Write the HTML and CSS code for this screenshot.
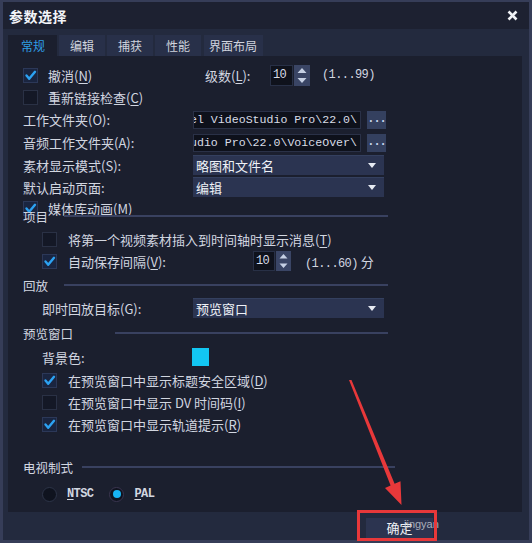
FILE: index.html
```html
<!DOCTYPE html>
<html lang="zh">
<head>
<meta charset="utf-8">
<title>参数选择</title>
<link rel="stylesheet" href="styles.css">
</head>
<body>
<div class="dialog">
  <div class="titlebar">
    <span class="title">参数选择</span>
    <svg class="close" width="11" height="11" viewBox="0 0 11 11"><path d="M1.5 1.5 L9.5 9.5 M9.5 1.5 L1.5 9.5"/></svg>
  </div>
  <div class="tabs">
    <div class="tab active">常规</div>
    <div class="tab">编辑</div>
    <div class="tab">捕获</div>
    <div class="tab">性能</div>
    <div class="tab last">界面布局</div>
  </div>
  <div class="panel">
    <div class="row r1">
      <span class="cb on"><svg viewBox="0 0 13 13"><path d="M2.5 6.5 L5.2 9.8 L11 2.8"/></svg></span>
      <span class="lbl w157">撤消(<u>N</u>)</span>
      <span class="lbl w65">级数(<u>L</u>):</span>
      <span class="spin"><span class="spin-val">10</span><span class="spin-btn"><svg viewBox="0 0 16 21"><path d="M8 3 L12.5 8 L3.5 8 Z M3.5 13 L12.5 13 L8 18 Z"/></svg></span></span>
      <span class="mono range">(1...99)</span>
    </div>
    <div class="row r2">
      <span class="cb"></span>
      <span class="lbl">重新链接检查(<u>C</u>)</span>
    </div>
    <div class="row r3">
      <span class="lbl w170">工作文件夹(O):</span>
      <span class="path"><span class="path-t">el VideoStudio Pro\22.0\</span></span>
      <span class="dots">...</span>
    </div>
    <div class="row r3">
      <span class="lbl w170">音频工作文件夹(A):</span>
      <span class="path"><span class="path-t">udio Pro\22.0\VoiceOver\</span></span>
      <span class="dots">...</span>
    </div>
    <div class="row">
      <span class="lbl w170">素材显示模式(S):</span>
      <span class="select">略图和文件名<svg viewBox="0 0 8 5"><path d="M0 0 L8 0 L4 5 Z"/></svg></span>
    </div>
    <div class="row">
      <span class="lbl w170">默认启动页面:</span>
      <span class="select">编辑<svg viewBox="0 0 8 5"><path d="M0 0 L8 0 L4 5 Z"/></svg></span>
    </div>
    <div class="row r7">
      <span class="cb on"><svg viewBox="0 0 13 13"><path d="M2.5 6.5 L5.2 9.8 L11 2.8"/></svg></span>
      <span class="lbl">媒体库动画(<u>M</u>)</span>
    </div>
    <div class="grp g-proj"><span>项目</span></div>
    <div class="row ind mt2">
      <span class="cb"></span>
      <span class="lbl">将第一个视频素材插入到时间轴时显示消息(<u>T</u>)</span>
    </div>
    <div class="row ind">
      <span class="cb on"><svg viewBox="0 0 13 13"><path d="M2.5 6.5 L5.2 9.8 L11 2.8"/></svg></span>
      <span class="lbl w185">自动保存间隔(<u>V</u>):</span>
      <span class="spin small"><span class="spin-val">10</span><span class="spin-btn"><svg viewBox="0 0 15 20"><path d="M7.5 3 L11.5 7.5 L3.5 7.5 Z M3.5 12.5 L11.5 12.5 L7.5 17 Z"/></svg></span></span>
      <span class="range2"><span class="mono">(1...60)</span> 分</span>
    </div>
    <div class="grp mt3"><span>回放</span></div>
    <div class="row ind2 mt2">
      <span class="lbl w151">即时回放目标(G):</span>
      <span class="select">预览窗口<svg viewBox="0 0 8 5"><path d="M0 0 L8 0 L4 5 Z"/></svg></span>
    </div>
    <div class="grp g-pv mt4"><span>预览窗口</span></div>
    <div class="row ind2 mt3">
      <span class="lbl w150">背景色:</span>
      <span class="swatch"></span>
    </div>
    <div class="row ind mt1">
      <span class="cb on"><svg viewBox="0 0 13 13"><path d="M2.5 6.5 L5.2 9.8 L11 2.8"/></svg></span>
      <span class="lbl">在预览窗口中显示标题安全区域(<u>D</u>)</span>
    </div>
    <div class="row ind">
      <span class="cb"></span>
      <span class="lbl">在预览窗口中显示 DV 时间码(<u>I</u>)</span>
    </div>
    <div class="row ind">
      <span class="cb on"><svg viewBox="0 0 13 13"><path d="M2.5 6.5 L5.2 9.8 L11 2.8"/></svg></span>
      <span class="lbl">在预览窗口中显示轨道提示(<u>R</u>)</span>
    </div>
    <div class="grp g-tv"><span>电视制式</span></div>
    <div class="row ind2 mt6">
      <span class="rd"></span>
      <span class="mono rlbl"><u>N</u>TSC</span>
      <span class="rd on"></span>
      <span class="mono rlbl"><u>P</u>AL</span>
    </div>
  </div>
  <div class="footer">
    <div class="ok">确定</div>
  </div>
  <svg class="arrow" width="532" height="543" viewBox="0 0 532 543"><polygon points="349,380 351.5,380 394.6,483.8 400.5,481.2 401.5,505 385,488 390.6,485.6"/></svg>
  <div class="wm">jingyan</div>
  <div class="mark"></div>
</div>
</body>
</html>
```

FILE: styles.css
```css
html, body {
  margin: 0;
  padding: 0;
  background: #232a3e;
}
body {
  width: 532px;
  height: 543px;
  overflow: hidden;
  font-family: "Noto Sans CJK SC", "Noto Sans", sans-serif;
  color: #d2d6e0;
}
.dialog {
  position: relative;
  width: 532px;
  height: 543px;
  box-sizing: border-box;
  background: #232a3e;
  border-style: solid;
  border-color: #363d58;
  border-width: 2px 3px 3px 3px;
}
.titlebar {
  height: 27px;
  background: #1d2131;
  display: flex;
  align-items: center;
  justify-content: space-between;
  padding: 0 11px 0 6px;
}
.title {
  font-size: 14px;
  font-weight: 700;
  color: #f2f4f8;
  letter-spacing: 0.5px;
}
.close path {
  stroke: #f0f2f6;
  stroke-width: 2.6;
  fill: none;
}
.tabs {
  display: flex;
  gap: 2px;
  margin: 6px 0 0 5px;
  height: 21px;
}
.tab {
  font-size: 12px;
  line-height: 21px;
  padding: 0 11px;
  background: #283049;
  color: #cfd3dd;
}
.tab.active {
  background: #1b1f2e;
  color: #2f9de4;
  padding: 0 12px 0 13px;
}
.tab.last {
  padding: 0 6px 0 5px;
  margin-left: 1px;
}
.panel {
  margin-left: 5px;
  width: 514px;
  height: 456px;
  box-sizing: border-box;
  background: #1b1f2e;
  padding: 8px 0 0 15px;
}
.row {
  display: flex;
  align-items: center;
  height: 22px;
  font-size: 13px;
  white-space: nowrap;
}
.r3 { height: 23px; }
.r7 { height: 20px; }
.ind { padding-left: 19px; }
.ind2 { padding-left: 19px; }
.mt1 { margin-top: 1px; }
.mt2 { margin-top: 2px; }
.mt3 { margin-top: 3px; }
.mt4 { margin-top: 4px; }
.mt6 { margin-top: 6px; }
.lbl u, .rlbl u { text-decoration-thickness: 1px; text-underline-offset: 2px; }
.w157 { width: 157px; }
.w65 { width: 65px; }
.w170 { width: 170px; }
.w185 { width: 185px; }
.w151 { width: 151px; }
.w150 { width: 150px; }
.cb {
  width: 15px;
  height: 15px;
  box-sizing: border-box;
  border: 1px solid #2a3145;
  background: #141826;
  flex: none;
  display: flex;
  align-items: center;
  justify-content: center;
}
.cb.on {
  background: #1a2540;
  border-color: #2c3858;
}
.cb svg {
  width: 13px;
  height: 13px;
}
.cb path {
  fill: none;
  stroke: #2ca2f2;
  stroke-width: 2.4;
  stroke-linecap: round;
  stroke-linejoin: round;
}
.cb + .lbl { margin-left: 10px; }
.ind .cb + .lbl { margin-left: 11px; }
.mono {
  font-family: "Liberation Mono", "DejaVu Sans Mono", monospace;
  font-size: 12px;
  letter-spacing: -0.6px;
}
.range { margin-left: 12px; color: #d2d6e0; }
.range2 { margin-left: 14px; }
.spin {
  display: flex;
  gap: 1px;
  height: 21px;
}
.spin-val {
  width: 23px;
  box-sizing: border-box;
  background: #0f121c;
  border: 1px solid #283046;
  font-family: "Liberation Mono", monospace;
  font-size: 12px;
  letter-spacing: -0.6px;
  line-height: 19px;
  padding-left: 2px;
  color: #d8dce6;
}
.spin-btn {
  width: 16px;
  background: #3a4565;
  display: flex;
}
.spin-btn svg { width: 100%; height: 100%; }
.spin-btn path { fill: #c6d0e4; }
.spin.small { height: 20px; }
.spin.small .spin-val { width: 22px; line-height: 18px; }
.spin.small .spin-btn { width: 15px; }
.path {
  width: 168px;
  height: 18px;
  box-sizing: border-box;
  background: #0e111b;
  border: 1px solid #2a3147;
  overflow: hidden;
  font-family: "Liberation Mono", monospace;
  font-size: 11.6px;
  line-height: 16px;
  color: #d8dce6;
}
.path-t {
  display: block;
  margin-left: -4px;
}
.dots {
  margin-left: 6px;
  width: 19px;
  height: 18px;
  background: #34405f;
  color: #c8d4ec;
  font-family: "Liberation Mono", monospace;
  font-size: 12px;
  font-weight: 700;
  line-height: 16px;
  text-align: center;
  letter-spacing: -1px;
}
.select {
  width: 191px;
  height: 20px;
  box-sizing: border-box;
  background: #2b3451;
  border-top: 1px solid #34405f;
  display: flex;
  align-items: center;
  justify-content: space-between;
  padding: 0 8px 0 3px;
  color: #eef1f6;
  font-size: 13px;
}
.select svg { width: 8px; height: 5px; }
.select path { fill: #e6eaf2; }
.grp {
  display: flex;
  align-items: center;
  height: 20px;
  font-size: 12.5px;
  margin-right: 134px;
  color: #d2d6e0;
}
.grp::after {
  content: "";
  flex: 1;
  height: 2px;
  background: #394160;
  margin-left: 16px;
}
.g-proj { margin-top: -12px; }
.g-pv::after { margin-left: 42px; }
.g-tv { margin-top: 22px; margin-right: 127px; }
.g-tv::after { margin-left: 9px; }
.swatch {
  width: 17px;
  height: 18px;
  background: #12c6f2;
}
.rd {
  width: 15px;
  height: 15px;
  box-sizing: border-box;
  border-radius: 50%;
  background: #0f131f;
  border: 1px solid #2d3448;
  flex: none;
  display: flex;
  align-items: center;
  justify-content: center;
}
.rd.on { border-color: #3b3550; margin-left: 16px; }
.rd.on::after {
  content: "";
  width: 8px;
  height: 8px;
  border-radius: 50%;
  background: #17b3f3;
}
.rlbl {
  margin-left: 10px;
  font-weight: 700;
  color: #d2d6e0;
}
.footer {
  height: 28px;
  padding: 6px 0 0 363px;
  box-sizing: border-box;
}
.ok {
  width: 67px;
  height: 20px;
  background: #2c3450;
  color: #f0f2f6;
  font-size: 13px;
  line-height: 20px;
  text-align: center;
}
.arrow {
  position: absolute;
  left: -3px;
  top: -2px;
  pointer-events: none;
}
.arrow polygon { fill: #e8383a; }
.wm {
  position: absolute;
  left: 401px;
  top: 516px;
  width: 38px;
  overflow: hidden;
  font-family: "Liberation Sans", sans-serif;
  font-size: 11px;
  color: #c9cdd6;
  opacity: 0.8;
}
.mark {
  position: absolute;
  left: 354px;
  top: 508px;
  width: 80px;
  height: 31px;
  box-sizing: border-box;
  border: 3px solid #e8383a;
}
```
